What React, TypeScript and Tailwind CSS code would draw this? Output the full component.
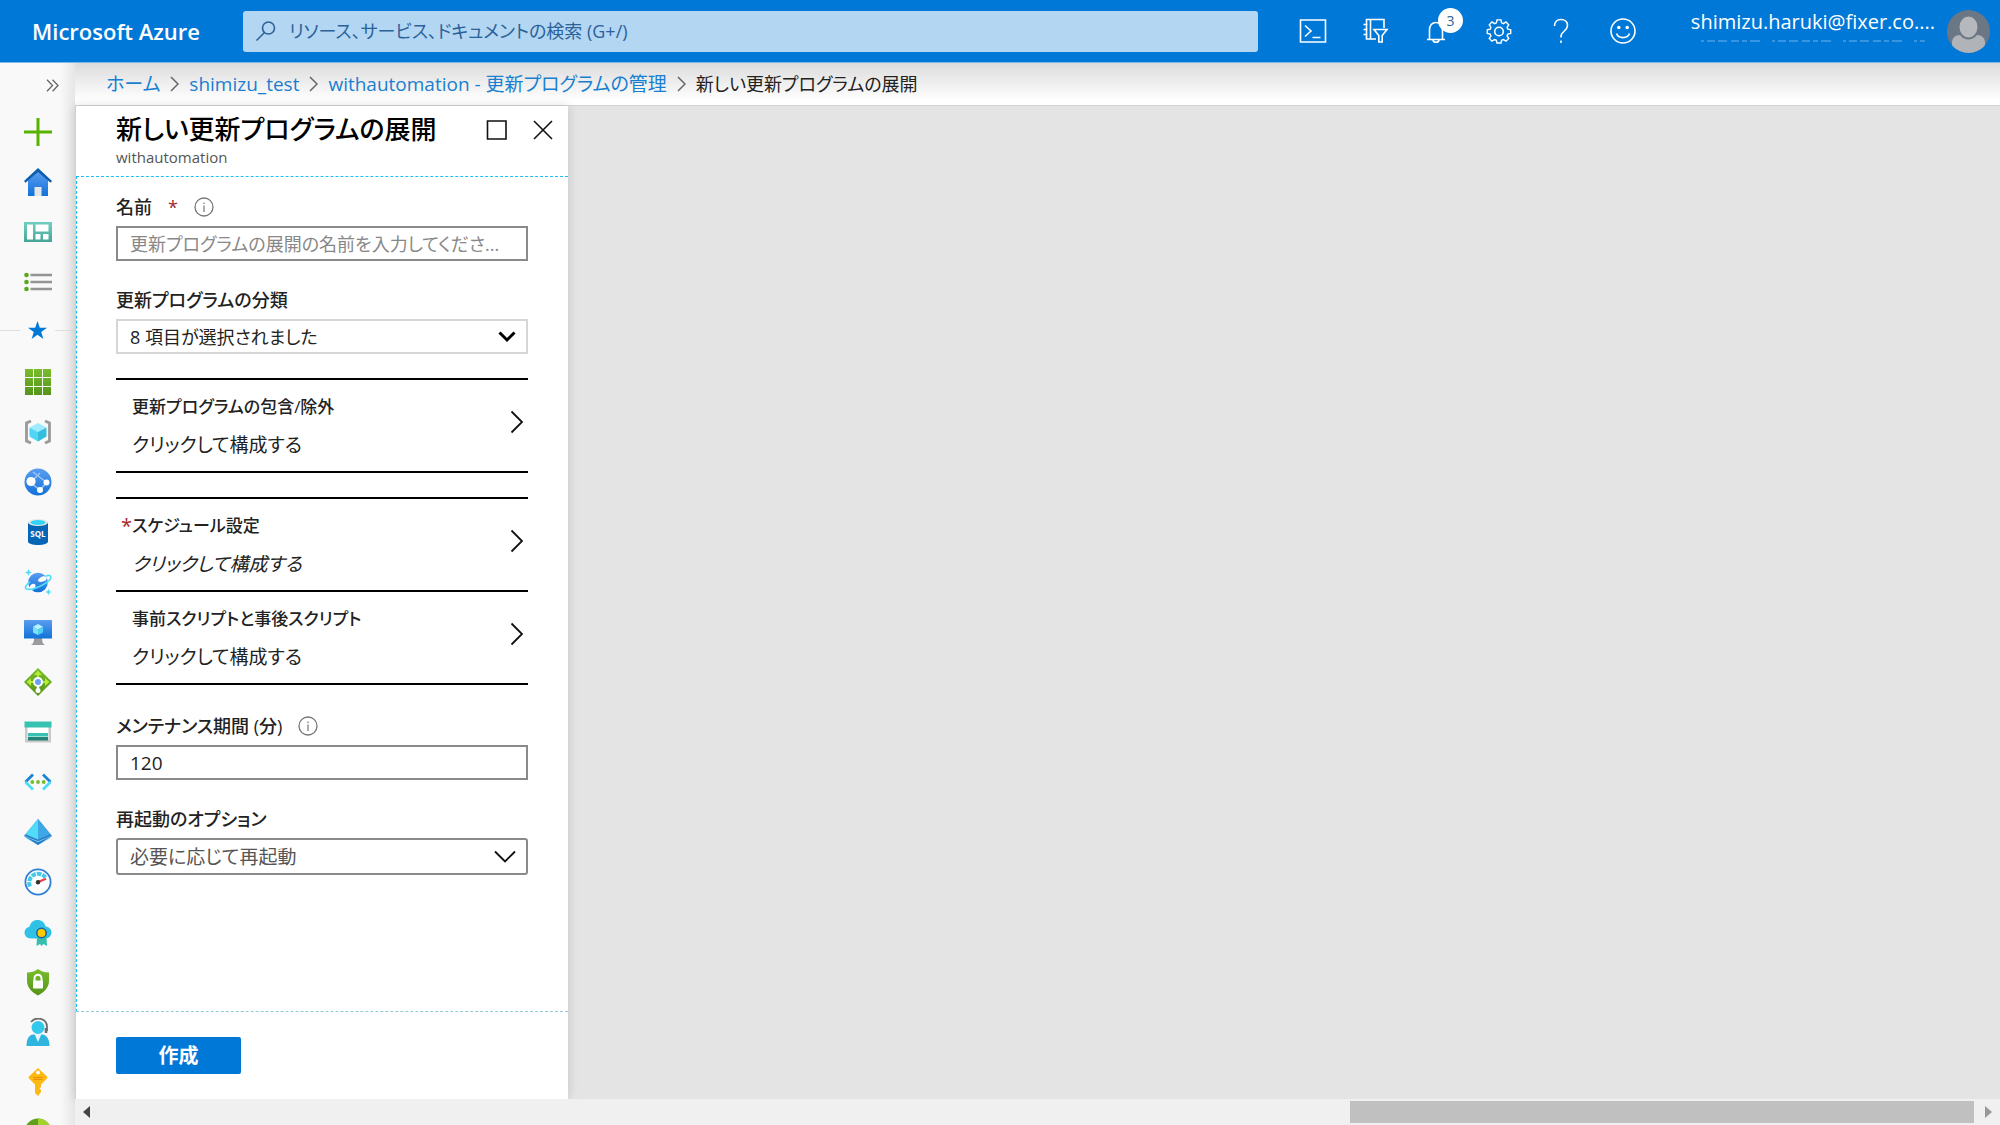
import type { ReactNode } from "react";

function Svg({ size = 28, children }: { size?: number; children: ReactNode }) {
  return (
    <svg width={size} height={size} viewBox="0 0 28 28" fill="none" aria-hidden="true">
      {children}
    </svg>
  );
}

const sideIcons: { label: string; icon: ReactNode }[] = [
  { label: "リソースの作成", icon: <path d="M14 0v28M0 14h28" stroke="#57b300" strokeWidth="3" /> },
  {
    label: "ホーム",
    icon: (
      <>
        <path d="M4 12L14 3l10 9v16H4z" fill="url(#blueV)" />
        <path d="M14 0L0 13l1.5 1.8L14 4l12.500 10.800L28 13z" fill="#0b5fae" />
        <path d="M10.500 19h7v9h-7z" fill="#e4e6ea" />
      </>
    ),
  },
  {
    label: "ダッシュボード",
    icon: (
      <>
        <rect y="4" width="28" height="20" fill="url(#tealV)" />
        <path d="M3 6.500h6v15H3zM11.500 6.500h13v7h-13zM11.500 16h5v5.500h-5zM19 16h5.500v5.500H19z" fill="#fff" />
      </>
    ),
  },
  {
    label: "すべてのサービス",
    icon: (
      <>
        <path d="M6.500 7H28M6.500 14H28M6.500 21H28" stroke="#949494" strokeWidth="2.400" />
        <g fill="#57a81c">
          <circle cx="2.500" cy="7" r="2.300" />
          <circle cx="2.500" cy="14" r="2.300" />
          <circle cx="2.500" cy="21" r="2.300" />
        </g>
      </>
    ),
  },
];

const favIcons: { label: string; icon: ReactNode }[] = [
  {
    label: "すべてのリソース",
    icon: (
      <path
        fill="url(#greenV)"
        d="M1 1h8v8H1zM10 1h8v8h-8zM19 1h8v8h-8zM1 10h8v8H1zM10 10h8v8h-8zM19 10h8v8h-8zM1 19h8v8H1zM10 19h8v8h-8zM19 19h8v8h-8z"
      />
    ),
  },
  {
    label: "リソース グループ",
    icon: (
      <>
        <path d="M7 3L2.500 5v18L7 25M21 3l4.500 2v18L21 25" stroke="#999" strokeWidth="2.800" />
        <path d="M14 5l8.500 4.500L14 14 5.500 9.500z" fill="#9cebff" />
        <path d="M5.500 9.500L14 14v9.500l-8.500-5z" fill="#50d5f5" />
        <path d="M22.500 9.500L14 14v9.500l8.500-5z" fill="#32bedd" />
      </>
    ),
  },
  {
    label: "App Services",
    icon: (
      <>
        <circle cx="14" cy="14" r="13.500" fill="url(#blueV)" />
        <path d="M7 14l9-9M9 4l13 10M7 15l9 7 7-8" stroke="#9fc5f8" strokeWidth="1.500" />
        <circle cx="7" cy="13.500" r="4.600" fill="#fff" />
        <circle cx="22.500" cy="14.500" r="3" fill="#fff" />
        <circle cx="16" cy="22" r="3" fill="#fff" />
      </>
    ),
  },
  {
    label: "SQL データベース",
    icon: (
      <>
        <path d="M4 4.500v19C4 25.500 8.500 27 14 27s10-1.500 10-3.500v-19z" fill="#0765b6" />
        <ellipse cx="14" cy="4.500" rx="10" ry="3.500" fill="#e8e8e8" />
        <ellipse cx="14" cy="4.500" rx="7.500" ry="2.400" fill="#32d4f5" />
        <text x="14" y="18.500" fill="#fff" fontSize="8" fontWeight="700" textAnchor="middle" fontFamily="Open Sans, sans-serif">SQL</text>
      </>
    ),
  },
  {
    label: "Azure Cosmos DB",
    icon: (
      <>
        <circle cx="14" cy="14.500" r="9.800" fill="url(#blueV)" />
        <path d="M14 12c2-3 6-5 8-3 1.500 2 0 4-3 4.500-2 .5-5 1-5-1.500zM5.500 20c0-3 3-5 5-4 2 1.200 1 4-1 5.500-2 1-3.500.3-4-1.500z" fill="#fff" />
        <path d="M22 8c4-1.500 5.500 0 4.500 2.500C25 15 8 23 2.500 21 0 20 2 16.500 6 14" stroke="#50dcf5" strokeWidth="1.600" />
        <path d="M4.500 1l1 2.500L8 4.500 5.500 5.500l-1 2.500-1-2.500L1 4.500l2.500-1zM24.500 21l1 2 2 1-2 1-1 2-1-2-2-1 2-1z" fill="#50dcf5" />
      </>
    ),
  },
  {
    label: "Virtual Machines",
    icon: (
      <>
        <path d="M10 20h8c0 4 1 6 3 7H7c2-1 3-3 3-7z" fill="#999b9e" />
        <rect y="2" width="28" height="18.500" rx=".6" fill="url(#blueV)" />
        <path d="M14 6l5 2.800L14 11.500 9 8.800z" fill="#b8f2ff" />
        <path d="M9 8.800l5 2.700V17l-5-2.600z" fill="#7be3fa" />
        <path d="M19 8.800l-5 2.700V17l5-2.600z" fill="#50d0ef" />
      </>
    ),
  },
  {
    label: "ロード バランサー",
    icon: (
      <>
        <path d="M14 0l14 14-14 14L0 14z" fill="url(#greenV)" />
        <path d="M14 10V5M9 14H4.500M19 14h4.500" stroke="#b4ec36" strokeWidth="2.200" />
        <path d="M10 7l4-4.500L18 7zM7 10l-4.500 4L7 18zM21 10l4.500 4-4.500 4z" fill="#b4ec36" />
        <path d="M14 17v5" stroke="#fff" strokeWidth="2.400" />
        <circle cx="14" cy="14" r="4" fill="#6a9ef7" stroke="#fff" strokeWidth="2" />
        <circle cx="14" cy="22.500" r="2.500" fill="#fff" />
      </>
    ),
  },
  {
    label: "ストレージ アカウント",
    icon: (
      <>
        <path d="M1 8h26v16.500H1z" fill="#c9c9c9" />
        <path d="M3.500 9h21v12.500h-21z" fill="#fff" />
        <path d="M.5 3.500h27v6H.5z" fill="#37c2b1" />
        <path d="M4 15h20v3.500H4z" fill="#37c2b1" />
        <path d="M4 19h20v3.500H4z" fill="#258277" />
      </>
    ),
  },
  {
    label: "仮想ネットワーク",
    icon: (
      <>
        <path d="M9 6.500L1.500 14M19 6.500l7.500 7.500" stroke="#1b84d8" strokeWidth="2.800" />
        <path d="M1.500 14L9 21.500M26.500 14L19 21.500" stroke="#50dcf8" strokeWidth="2.800" />
        <g fill="#76bc2d">
          <circle cx="8.300" cy="14" r="1.900" />
          <circle cx="14" cy="14" r="1.900" />
          <circle cx="19.700" cy="14" r="1.900" />
        </g>
      </>
    ),
  },
  {
    label: "Azure Active Directory",
    icon: (
      <>
        <path d="M14 1L28 18 14 27 0 18z" fill="#2b7fc8" />
        <path d="M14 1v20.500L1.500 16.300z" fill="#50dcf8" />
        <path d="M14 1l12.500 15.300L14 21.500z" fill="#3fa7e6" />
        <path d="M0 17.800l14 5.400 14-5.400-2.500 3L14 27 2.500 20.800z" fill="#9be0f8" />
        <path d="M0 18l14 6 14-6-14 9z" fill="#2a7cc4" />
      </>
    ),
  },
  {
    label: "モニター",
    icon: (
      <>
        <circle cx="14" cy="14" r="12.600" fill="#fff" stroke="#2f7fd6" strokeWidth="1.800" />
        <path d="M6 18.500a9 9 0 0 1 15.500-9" stroke="#45c9ea" strokeWidth="4" strokeDasharray="4.500 1" />
        <path d="M14 14l8-3.300" stroke="#e8414c" strokeWidth="2.200" />
        <circle cx="14" cy="14.200" r="2.200" fill="#333" />
      </>
    ),
  },
  {
    label: "Advisor",
    icon: (
      <>
        <path d="M7 20.500C3 20.500.5 17.700.5 14.500c0-3 2-5.300 5-5.800C6.500 4.500 9.500 2 13.500 2c4.200 0 7.300 2.700 8.200 6.500 3.300.3 5.800 2.800 5.800 6 0 3.300-2.800 6-6 6z" fill="#2fc1e6" />
        <path d="M13 19l-.5 9 3.500-2 1.500 2 2-2 3.500 2-.5-9z" fill="#36bfae" />
        <circle cx="17.500" cy="15" r="4.700" fill="#ffca00" stroke="#1e5f94" strokeWidth="1.500" />
      </>
    ),
  },
  {
    label: "セキュリティ センター",
    icon: (
      <>
        <path d="M14 1c3 2.500 7 3.500 11 3.500V13c0 7-5.500 11.500-11 14.500C8.500 24.500 3 20 3 13V4.500C7 4.500 11 3.500 14 1z" fill="url(#greenV)" />
        <path d="M10.500 13v-2.800a3.500 3.500 0 0 1 7 0V13" stroke="#fff" strokeWidth="2" />
        <rect x="9" y="12.500" width="10" height="8" rx=".8" fill="#fff" />
      </>
    ),
  },
  {
    label: "ヘルプとサポート",
    icon: (
      <>
        <path d="M7 4C12-2 23 0 23 9v4" stroke="#6d6d6d" strokeWidth="1.800" />
        <path d="M22 10v5" stroke="#6d6d6d" strokeWidth="2.600" />
        <path d="M2.500 28c0-7 2.500-11 6.500-11.500h9.500c4 .5 7 4.500 7 11.500z" fill="#2db5e0" />
        <circle cx="14" cy="9.500" r="6.500" fill="#32c9ec" />
        <path d="M10.500 16h7L14 24z" fill="#e8f7fc" />
      </>
    ),
  },
  {
    label: "キー コンテナー",
    icon: (
      <>
        <path d="M14 0l9 8.500c.6.700.6 1.300 0 2L17 16.500V19l-1.500 1.500L17 22v2l-3 4-3-3V16.500l-6-6c-.6-.7-.6-1.300 0-2z" fill="#fdb913" />
        <circle cx="14" cy="4.500" r="1.900" fill="#fff" />
        <path d="M9.500 9.500h9M9.500 11.500h9" stroke="#f08c00" strokeWidth="1.100" />
      </>
    ),
  },
  {
    label: "コスト管理",
    icon: (
      <>
        <circle cx="14" cy="14" r="13.500" fill="#5f9f1c" />
        <path d="M14 .5A13.500 13.500 0 0 1 27.500 14H14z" fill="#a3d12f" />
        <circle cx="14" cy="14" r="6" fill="#f8f8f8" />
      </>
    ),
  },
];

function NavItem({ label, icon }: { label: string; icon: ReactNode }) {
  return (
    <li>
      <button type="button" aria-label={label} className="flex h-[50px] w-full items-center justify-center">
        <Svg>{icon}</Svg>
      </button>
    </li>
  );
}

const topIcons: { label: string; icon: ReactNode }[] = [
  {
    label: "Cloud Shell",
    icon: (
      <>
        <path d="M1.500 3h25v22h-25z" />
        <path d="M6 8.500l6 5.500-6 5.500M13.500 20.500h8" />
      </>
    ),
  },
  {
    label: "ディレクトリとサブスクリプション",
    icon: (
      <>
        <path d="M23 11V2.500H5.500v19.500H15M9.500 2.500V22M2.500 7.500h4M2.500 12.500h4M2.500 17.500h4" />
        <path d="M13 12.500h13l-4.800 6V25h-3.400v-6.500z" />
      </>
    ),
  },
  {
    label: "通知",
    icon: (
      <>
        <path d="M4 22.500h18M6.500 22.500V13C6.500 8.500 9 5.500 13 5.500s6.500 3 6.500 7.500v9.500M10 23c.5 3 5.500 3 6 0" />
      </>
    ),
  },
  {
    label: "設定",
    icon: (
      <>
        <path d="M11.800 2.500h4.400l.7 3.300 2 .9 2.900-1.800 3 3.100-1.800 2.900.8 2 3.200.7v4l-3.200.7-.8 2 1.800 2.900-3 3-2.900-1.800-2 .9-.7 3h-4.400l-.7-3-2-.9-2.900 1.800-3-3L5 20.300l-.8-2-3.200-.7v-4l3.200-.7.8-2L3.200 8l3-3.100 2.900 1.800 2-.9z" transform="translate(1.400 .6) scale(.9)" />
        <circle cx="14" cy="14.500" r="4.300" />
      </>
    ),
  },
  {
    label: "ヘルプ",
    icon: (
      <>
        <path d="M7.500 9c0-4 2.500-6.500 6.500-6.500s6.500 2.500 6.500 6c0 5.500-6.500 5.500-6.500 11v1" />
        <path d="M14 23.500v2.500" />
      </>
    ),
  },
  {
    label: "フィードバック",
    icon: (
      <>
        <circle cx="14" cy="14" r="12" />
        <path d="M7.500 16.500c2 5.500 11 5.500 13 0" />
        <circle cx="9.800" cy="10.500" r="1" fill="#fff" />
        <circle cx="18.200" cy="10.500" r="1" fill="#fff" />
      </>
    ),
  },
];

function InfoIcon() {
  return (
    <svg width="20" height="20" viewBox="0 0 20 20" fill="none" stroke="#777" aria-hidden="true">
      <circle cx="10" cy="10" r="9" strokeWidth="1.300" />
      <path d="M10 8.500V15M10 5.500v1.500" strokeWidth="1.200" />
    </svg>
  );
}

function Chevron() {
  return (
    <svg width="9" height="16" viewBox="0 0 9 16" fill="none" stroke="#666" strokeWidth="1.500" aria-hidden="true">
      <path d="M1 1l7 7-7 7" />
    </svg>
  );
}

function ConfigRow({ title, required, children }: { title: string; required?: boolean; children: ReactNode }) {
  return (
    <button type="button" className="flex h-[93px] w-full items-center justify-between border-t-2 border-black pr-1 pl-4 text-left text-[#222]">
      <span className="flex flex-col gap-2">
        <span className="relative text-[17px] leading-[30px] font-medium">
          {required && <span className="absolute right-full text-[20px] text-[#a4262c]">*</span>}
          {title}
        </span>
        <span className="text-[19px] leading-[30px]">{children}</span>
      </span>
      <svg width="14" height="24" viewBox="0 0 14 24" fill="none" stroke="#111" strokeWidth="1.800" className="mb-2" aria-hidden="true">
        <path d="M1.500 1.500L12 12 1.500 22.500" />
      </svg>
    </button>
  );
}

export default function App() {
  return (
    <div className="flex h-screen flex-col overflow-hidden bg-white font-['Open_Sans','Noto_Sans_CJK_JP',sans-serif] [font-feature-settings:'palt']">
      <svg width="0" height="0" className="absolute" aria-hidden="true">
        <defs>
          <linearGradient id="blueV" x1="0" y1="0" x2="0" y2="1">
            <stop offset="0" stopColor="#5a9df0" />
            <stop offset="1" stopColor="#1272d8" />
          </linearGradient>
          <linearGradient id="greenV" x1="0" y1="0" x2="0" y2="1">
            <stop offset="0" stopColor="#79bd2c" />
            <stop offset="1" stopColor="#559419" />
          </linearGradient>
          <linearGradient id="tealV" x1="0" y1="0" x2="0" y2="1">
            <stop offset="0" stopColor="#6fcfc0" />
            <stop offset="1" stopColor="#46a597" />
          </linearGradient>
        </defs>
      </svg>

      <header className="flex h-[63px] shrink-0 items-center border-b border-[#7db8ea] bg-[#0078d7] text-white">
        <a href="#" className="w-[243px] shrink-0 pl-8 text-[22px] font-semibold">Microsoft Azure</a>
        <label className="flex h-[41px] max-w-[1015px] flex-1 items-center gap-3 rounded-[3px] bg-[#b3d6f2] pl-3 text-[#2b6299]">
          <svg width="22" height="22" viewBox="0 0 22 22" fill="none" stroke="currentColor" strokeWidth="1.600" aria-hidden="true">
            <circle cx="13.500" cy="8" r="6" />
            <path d="M9.500 12.500L1.500 20.500" />
          </svg>
          <input
            type="text"
            aria-label="検索"
            placeholder="リソース、サービス、ドキュメントの検索 (G+/)"
            className="h-full flex-1 bg-transparent text-[18px] outline-none placeholder:text-[#2b6299]"
          />
        </label>
        <div className="ml-6 flex">
          {topIcons.map((t) => (
            <button key={t.label} type="button" aria-label={t.label} className="relative flex h-[62px] w-[62px] items-center justify-center">
              <svg width="28" height="28" viewBox="0 0 28 28" fill="none" stroke="#fff" strokeWidth="1.600" aria-hidden="true">
                {t.icon}
              </svg>
              {t.label === "通知" && (
                <span className="absolute top-2 left-8 flex size-[25px] items-center justify-center rounded-full bg-white text-sm text-[#2b6299]">3</span>
              )}
            </button>
          ))}
        </div>
        <button type="button" className="ml-auto flex items-center gap-3 pr-[10px]">
          <span className="flex flex-col items-center gap-1 pb-3">
            <span className="text-[20px] leading-[28px]">shimizu.haruki@fixer.co....</span>
            <svg width="224" height="2" viewBox="0 0 224 2" stroke="#6fb3ec" strokeWidth="1" aria-hidden="true">
              <path d="M0 1h224" strokeDasharray="3 3 8 3 9 4 8 3 5 3 10 12" />
            </svg>
          </span>
          <svg width="43" height="43" viewBox="0 0 43 43" aria-hidden="true">
            <clipPath id="avatar"><circle cx="21.500" cy="21.500" r="21.500" /></clipPath>
            <g clipPath="url(#avatar)">
              <path d="M0 0h43v43H0z" fill="#6b7785" />
              <path d="M5 43V33c0-5 3-8 8-8h17c5 0 8 3 8 8v10z" fill="#b0b4b9" />
              <ellipse cx="21.500" cy="17" rx="10" ry="11.500" fill="#b5b8bc" stroke="#6b7785" strokeWidth="2" />
            </g>
          </svg>
        </button>
      </header>

      <div className="flex min-h-0 flex-1">
        <nav aria-label="お気に入り" className="w-[75px] shrink-0 overflow-hidden bg-linear-to-r from-[#f9f9f9] from-80% to-[#e6e6e6]">
          <button type="button" aria-label="メニューを展開" className="flex h-[44px] w-full items-center justify-end pr-4">
            <svg width="13" height="13" viewBox="0 0 13 13" fill="none" stroke="#666" strokeWidth="1.300" aria-hidden="true">
              <path d="M1 .8l5.500 5.700L1 12.200M6.500.8L12 6.500l-5.500 5.700" />
            </svg>
          </button>
          <ul>
            {sideIcons.map((s) => <NavItem key={s.label} {...s} />)}
            <li className="flex h-[50px] items-center justify-between pb-1" aria-hidden="true">
              <span className="h-px w-5 bg-[#dedede]" />
              <svg width="19" height="18" viewBox="0 0 19 18" fill="#0078d7">
                <path d="M9.500 0l2.300 6.700H19l-5.800 4.200 2.200 7.100-5.900-4.300L3.600 18l2.200-7.100L0 6.700h7.200z" />
              </svg>
              <span className="h-px w-5 bg-[#dedede]" />
            </li>
            {favIcons.map((s) => <NavItem key={s.label} {...s} />)}
          </ul>
        </nav>

        <div className="flex min-w-0 flex-1 flex-col">
          <nav aria-label="階層リンク" className="flex h-[43px] shrink-0 items-center gap-[10px] border-b border-[#d4d4d4] bg-linear-to-b from-[#dcdcdc] to-white to-90% pl-[31px] text-[19px] text-[#1a7fd0]">
            <a href="#">ホーム</a>
            <Chevron />
            <a href="#">shimizu_test</a>
            <Chevron />
            <a href="#">withautomation - 更新プログラムの管理</a>
            <Chevron />
            <span className="text-[18px] text-[#222]">新しい更新プログラムの展開</span>
          </nav>

          <main className="flex min-h-0 flex-1 bg-[#e4e4e4]">
            <section className="flex w-[493px] shrink-0 flex-col border-l border-[#d0d0d0] bg-white shadow-[0_0_10px_rgba(0,0,0,0.14)]">
              <header className="flex h-[70px] shrink-0 items-start justify-between pr-[14px] pl-10">
                <div>
                  <h1 className="pt-1 text-[26px] leading-[38px] font-medium text-black">新しい更新プログラムの展開</h1>
                  <p className="text-[15px] leading-[18px] text-[#555]">withautomation</p>
                </div>
                <div className="flex gap-6 pt-[13px]">
                  <button type="button" aria-label="最大化">
                    <svg width="22" height="22" viewBox="0 0 22 22" fill="none" stroke="#111" strokeWidth="1.600" aria-hidden="true">
                      <path d="M1.500 2h18.500v18H1.500z" />
                    </svg>
                  </button>
                  <button type="button" aria-label="閉じる">
                    <svg width="22" height="22" viewBox="0 0 22 22" fill="none" stroke="#111" strokeWidth="1.600" aria-hidden="true">
                      <path d="M2 2l18 18M20 2L2 20" />
                    </svg>
                  </button>
                </div>
              </header>

              <form id="deploy" className="min-h-0 flex-1 border-y border-l border-dashed border-[#1cc0f5] border-b-[#8fc9dd] pt-[14px] pr-10 pl-[39px] text-[18px] text-[#222]">
                <label htmlFor="name" className="flex h-[35px] items-center pb-[3px] font-medium">
                  名前
                  <span className="ml-4 text-[#a4262c]">*</span>
                  <span className="ml-4"><InfoIcon /></span>
                </label>
                <input
                  id="name"
                  type="text"
                  placeholder="更新プログラムの展開の名前を入力してくださ..."
                  className="block h-[35px] w-full border-2 border-[#8a8a8a] px-3 outline-none placeholder:text-[#888]"
                />
                <label htmlFor="classification" className="mt-[23px] flex h-[35px] items-center pb-[3px] font-medium">更新プログラムの分類</label>
                <div className="relative">
                  <select id="classification" className="block h-[35px] w-full appearance-none border-2 border-[#d6d6d6] bg-white px-3 leading-[30px]">
                    <option>8 項目が選択されました</option>
                  </select>
                  <svg width="18" height="12" viewBox="0 0 18 12" fill="none" stroke="#000" strokeWidth="3" className="pointer-events-none absolute top-3 right-3" aria-hidden="true">
                    <path d="M1.500 1.500L9 9l7.500-7.500" />
                  </svg>
                </div>

                <div className="mt-[24px] border-b-2 border-black">
                  <ConfigRow title="更新プログラムの包含/除外">クリックして構成する</ConfigRow>
                </div>
                <div className="mt-[24px] border-b-2 border-black">
                  <ConfigRow title="スケジュール設定" required><i>クリックして構成する</i></ConfigRow>
                  <ConfigRow title="事前スクリプトと事後スクリプト">クリックして構成する</ConfigRow>
                </div>

                <label htmlFor="window" className="mt-[25px] flex h-[35px] items-center pb-[3px] font-medium">
                  メンテナンス期間 (分)
                  <span className="ml-4"><InfoIcon /></span>
                </label>
                <input id="window" type="text" defaultValue="120" className="block h-[35px] w-full border-2 border-[#8a8a8a] px-3 text-[19px] outline-none" />
                <label htmlFor="reboot" className="mt-[23px] flex h-[35px] items-center pb-[3px] font-medium">再起動のオプション</label>
                <div className="relative">
                  <select id="reboot" className="block h-[37px] w-full appearance-none rounded-[3px] border-2 border-[#8a8a8a] bg-white px-3 text-[19px] leading-[32px] text-[#555]">
                    <option>必要に応じて再起動</option>
                  </select>
                  <svg width="22" height="13" viewBox="0 0 22 13" fill="none" stroke="#111" strokeWidth="1.900" className="pointer-events-none absolute top-3 right-3" aria-hidden="true">
                    <path d="M1 1.500l10 10 10-10" />
                  </svg>
                </div>
              </form>

              <footer className="flex h-[87px] shrink-0 items-center px-10">
                <button type="submit" form="deploy" className="h-[37px] w-[125px] rounded-[2px] bg-[#0078d7] text-[20px] leading-[36px] font-bold text-white">作成</button>
              </footer>
            </section>
          </main>

          <div className="flex h-[26px] shrink-0 items-center bg-[#f0f0f0] px-2">
            <svg width="8" height="12" viewBox="0 0 8 12" aria-hidden="true"><path d="M7 0v12L0 6z" fill="#444" /></svg>
            <div className="mx-[10px] flex h-[22px] flex-1 justify-end">
              <div className="h-full w-1/3 bg-[#c0c0c0]" />
            </div>
            <svg width="8" height="12" viewBox="0 0 8 12" aria-hidden="true"><path d="M1 0v12l7-6z" fill="#999" /></svg>
          </div>
        </div>
      </div>
    </div>
  );
}
